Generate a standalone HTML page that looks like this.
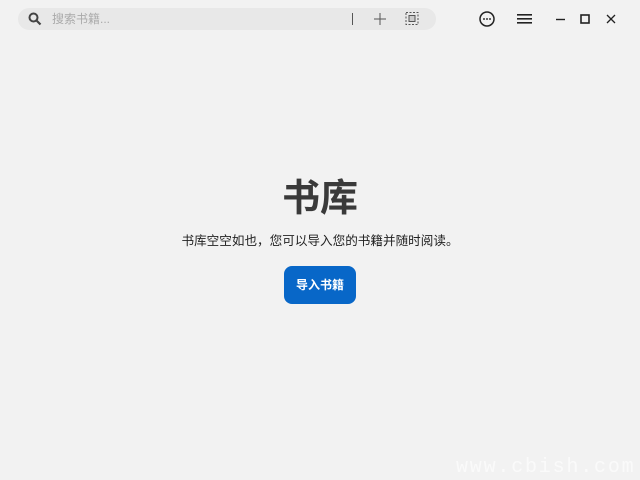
<!DOCTYPE html>
<html><head><meta charset="utf-8"><style>
body{margin:0;width:640px;height:480px;background:#f2f2f2;position:relative;overflow:hidden;font-family:"Liberation Sans","Noto Sans CJK SC",sans-serif;}
.search{position:absolute;left:18px;top:8px;width:418px;height:22px;border-radius:11px;background:#e8e8e8;}
.ph{position:absolute;left:52px;top:11px;font-size:12px;color:#aaa;line-height:16px;}
svg{position:absolute}
h1{position:absolute;left:0;right:0;top:176px;margin:0;text-align:center;font-size:38px;font-weight:bold;color:#3a3a3a;line-height:46px;}
.sub{position:absolute;left:0;right:0;top:232px;text-align:center;font-size:12.6px;color:#222;line-height:18px;}
.btn{position:absolute;left:284px;top:266px;width:72px;height:38px;border-radius:8px;background:#0867c8;color:#fff;font-size:12px;font-weight:bold;text-align:center;line-height:38px;}
.wm{position:absolute;left:456px;top:457px;font-family:"Liberation Mono",monospace;font-size:20px;line-height:22px;color:#fafafa;letter-spacing:1.8px;}
</style></head><body>
<div class="search"></div>
<svg style="left:28px;top:12px" width="14" height="14" viewBox="0 0 14 14"><circle cx="5.5" cy="5.5" r="4" fill="none" stroke="#444" stroke-width="2"/><line x1="8.5" y1="8.5" x2="12.5" y2="12.5" stroke="#444" stroke-width="2.2"/></svg>
<div class="ph">搜索书籍...</div>
<svg style="left:350px;top:11px" width="100" height="16"><line x1="2.5" y1="2" x2="2.5" y2="14" stroke="#555"/><line x1="24" y1="8" x2="36" y2="8" stroke="#555"/><line x1="30" y1="2" x2="30" y2="14" stroke="#555"/><rect x="56" y="1.5" width="12" height="12" fill="none" stroke="#555" stroke-dasharray="2 1.5"/><rect x="59" y="4.5" width="6" height="6" fill="#ccc" stroke="#555"/></svg>
<svg style="left:478px;top:10px" width="18" height="18"><circle cx="9" cy="9" r="7" fill="none" stroke="#222" stroke-width="1.5"/><circle cx="6" cy="9" r=".9"/><circle cx="9" cy="9" r=".9"/><circle cx="12" cy="9" r=".9"/></svg>
<svg style="left:516px;top:12px" width="18" height="14"><rect x="1" y="2" width="15" height="1.6" fill="#222"/><rect x="1" y="6" width="15" height="1.6" fill="#222"/><rect x="1" y="10" width="15" height="1.6" fill="#222"/></svg>
<svg style="left:554px;top:12px" width="66" height="14"><line x1="2" y1="7.5" x2="11" y2="7.5" stroke="#222" stroke-width="1.4"/><rect x="27" y="3" width="8" height="8" fill="none" stroke="#222" stroke-width="1.6"/><path d="M53 3L61 11M61 3L53 11" stroke="#222" stroke-width="1.3"/></svg>
<h1>书库</h1>
<div class="sub">书库空空如也，您可以导入您的书籍并随时阅读。</div>
<div class="btn">导入书籍</div>
<div class="wm">www.cbish.com</div>
</body></html>
